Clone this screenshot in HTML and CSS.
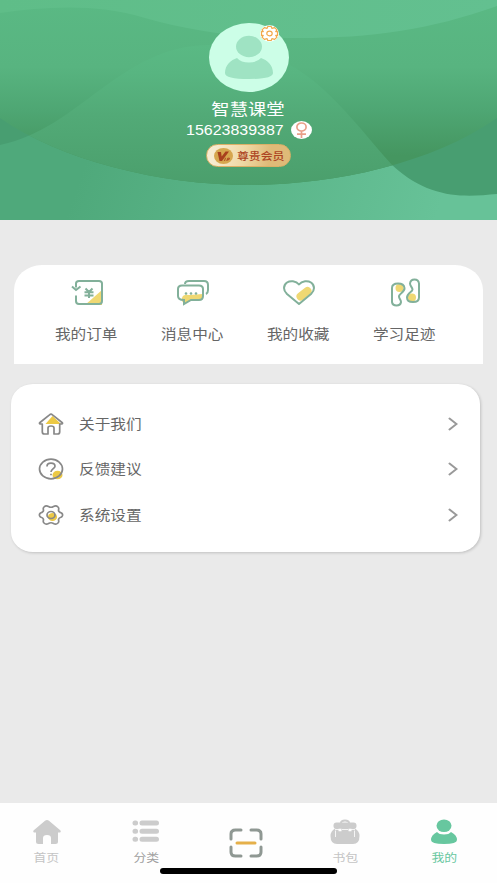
FILE: index.html
```html
<!DOCTYPE html>
<html lang="zh-CN">
<head>
<meta charset="utf-8">
<title>我的</title>
<link rel="stylesheet" href="styles.css">
</head>
<body>
<div class="app">
  <header class="hero">
    <svg class="hero-bg" viewBox="0 0 497 220" preserveAspectRatio="none">
      <defs>
        <linearGradient id="sky" x1="0" y1="0" x2="0" y2="185" gradientUnits="userSpaceOnUse"><stop offset="0" stop-color="#5ab984"/><stop offset=".36" stop-color="#58b480"/><stop offset=".6" stop-color="#4ea673"/><stop offset=".84" stop-color="#459660"/></linearGradient>
        <linearGradient id="hill" x1="0" y1="45" x2="0" y2="185" gradientUnits="userSpaceOnUse"><stop offset="0" stop-color="#5ab984"/><stop offset=".2" stop-color="#58b581"/><stop offset=".5" stop-color="#52aa77"/><stop offset="1" stop-color="#4b9f6c"/></linearGradient>
        <linearGradient id="ground" x1="100" y1="120" x2="430" y2="235" gradientUnits="userSpaceOnUse"><stop offset="0" stop-color="#4fa97b"/><stop offset="1" stop-color="#67c298"/></linearGradient>
        <linearGradient id="top" x1="0" y1="0" x2="497" y2="0" gradientUnits="userSpaceOnUse"><stop offset="0" stop-color="#5fbd88"/><stop offset="1" stop-color="#63c090"/></linearGradient>
        <clipPath id="bowl"><path d="M0 0H497V118C430 165 330 185 248 185C160 185 60 160 0 118Z"/></clipPath>
      </defs>
      <path fill="#489e71" d="M0 0H497V220H0Z"/>
      <path fill="url(#ground)" d="M0 145C80 129 120 45 210 45C303 45 340 107 392 165C430 200 465 197 497 194V220H0Z"/>
      <g clip-path="url(#bowl)">
        <path fill="url(#sky)" d="M0 0H497V220H0Z"/>
        <path fill="url(#hill)" d="M0 145C80 129 120 45 210 45C303 45 340 107 392 165C430 200 465 197 497 194V220H0Z"/>
      </g>
      <path fill="url(#top)" d="M0 0H497V6C430 30 370 38 300 38C240 38 195 32 145 18C95 3 45 7 0 13Z"/>
    </svg>
    <div class="avatar">
      <svg width="80" height="69" viewBox="0 0 80 69"><ellipse cx="40" cy="34.500" rx="40" ry="34.500" fill="#ccfee7"/><ellipse cx="40" cy="23.500" rx="13" ry="10.700" fill="#9fe3c3"/><path fill="#9fe3c3" d="M28 35Q32 39.500 40 39.500T52 35C58 37 64 42 64 50Q64 56 40 56T16 50C16 42 22 37 28 35Z"/></svg>
      <svg class="avatar-gear" width="19" height="17" viewBox="0 0 19 17"><ellipse cx="9.500" cy="8.500" rx="9.500" ry="8.300" fill="#fff"/><g fill="none" stroke="#f2a94c" stroke-width="1.200" stroke-linejoin="round"><path d="M7.800 1.500H11.200L11.900 3.400L14.600 2.600L17 4.900L15.700 6.600H17.500V10.400H15.700L17 12.100L14.600 14.400L11.900 13.600L11.200 15.500H7.800L7.100 13.600L4.400 14.400L2 12.100L3.300 10.400H1.500V6.600H3.300L2 4.900L4.400 2.600L7.100 3.400Z"/><ellipse cx="9.500" cy="8.500" rx="2.700" ry="2.300"/></g></svg>
    </div>
    <div class="name">智慧课堂</div>
    <div class="phone-row">
      <span class="phone">15623839387</span>
      <svg width="21" height="18" viewBox="0 0 21 18"><ellipse cx="10.500" cy="9" rx="10.500" ry="9" fill="#fff"/><g fill="none" stroke="#e9a08a" stroke-width="1.700"><ellipse cx="10.500" cy="6" rx="4.600" ry="4"/><path d="M10.500 10V17M6 13.200H15"/></g></svg>
    </div>
    <div class="vip">
      <svg width="19" height="16" viewBox="0 0 19 16"><ellipse cx="9.500" cy="8" rx="9.500" ry="8" fill="#d6a64e"/><path fill="#a8401d" d="M3.500 4H7L7.700 8.500L11.500 3.500H15L8 13H5.500Z"/><path d="M10.500 13L11.500 9.800M12.800 13L13.700 10.200H15.500L15 11.700H13.300" fill="none" stroke="#a8401d" stroke-width=".9"/></svg>
      <span class="vip-text">尊贵会员</span>
    </div>
  </header>

  <nav class="shortcuts">
    <a class="shortcut"><svg width="34" height="30" viewBox="0 0 34 30"><path fill="#efd873" d="M32 12V27H15Z"/><g fill="none" stroke="#82b09a" stroke-width="2"><path d="M6 9.500V5.500Q6 3 9 3H29Q32 3 32 5.500V23Q32 26 29 26H9Q6 26 6 23V17.500"/><path d="M2 8.500L6 12L10.500 8.500M15.500 10.500L19 14L22.500 10.500M14.500 14.300H23.500M14.500 17.500H23.500M19 14V20"/></g></svg><span class="label">我的订单</span></a>
    <a class="shortcut"><svg width="34" height="30" viewBox="0 0 34 30"><path fill="#efd873" d="M6 23V20Q7 16 13 17L27 16V19Q26 22 22 22H15L8 26Z"/><g fill="none" stroke="#82b09a" stroke-width="2"><path d="M9 6Q9 3 13 3H28Q32 3 32 7V12Q32 15 30 16"/><path d="M6 7.500H23Q27 7.500 27 11V18Q27 22 23 22H15L8 26V22Q2 22 2 18V11Q2 7.500 6 7.500Z"/></g><g fill="#82b09a"><circle cx="10" cy="15.500" r="1.300"/><circle cx="15" cy="15.500" r="1.300"/><circle cx="20" cy="15.500" r="1.300"/></g></svg><span class="label">消息中心</span></a>
    <a class="shortcut"><svg width="34" height="30" viewBox="0 0 34 30"><path d="M18.500 18.500L25.500 13" stroke="#efd873" stroke-width="8" stroke-linecap="round"/><path fill="none" stroke="#82b09a" stroke-width="2" stroke-linejoin="round" d="M17 6.500C14 2.500 8 2.500 5 4.500C1 7.500 1 12 5 16L17 26L29 16C33 12 33 7.500 29 4.500C26 2.500 20 2.500 17 6.500Z"/></svg><span class="label">我的收藏</span></a>
    <a class="shortcut"><svg width="34" height="30" viewBox="0 0 34 30"><circle cx="11.500" cy="10" r="4" fill="#efd873"/><circle cx="24" cy="19.500" r="4" fill="#efd873"/><g fill="none" stroke="#82b09a" stroke-width="2"><path d="M4 10Q4 5.500 10 5.500T16.500 10C17 14 11 15.500 11 18.500C11 20.500 13 22 13 24Q12.500 27.500 8.500 27.500T4 24Z"/><path d="M31 19.500Q31 24 25 24T19 19.500C19 15 24.500 14 24.500 11.500C24.500 9.500 22 8 22 5.500Q22.500 1.500 26.500 1.500T31 5.500Z"/></g></svg><span class="label">学习足迹</span></a>
  </nav>

  <section class="menu">
    <a class="item"><svg width="26" height="24" viewBox="0 0 26 24"><path fill="#ecc945" d="M14.500 4L23 12H7.500Z"/><path fill="none" stroke="#888" stroke-width="1.700" stroke-linejoin="round" d="M4.300 12H2.200Q.8 11.500 2 10.500L11.500 2.800Q13 1.500 14.500 2.800L24 10.500Q25.200 11.500 23.800 12H21.700V20Q21.700 22 19.500 22H16V16Q16 14 13 14T10 16V22H6.500Q4.300 22 4.300 20Z"/></svg><span class="label">关于我们</span><svg class="chevron" width="10" height="14" viewBox="0 0 10 14"><path d="M1.500 1.500L8.500 7L1.500 12.500"/></svg></a>
    <a class="item"><svg width="26" height="24" viewBox="0 0 26 24"><ellipse cx="19.500" cy="18" rx="5" ry="4.300" fill="#ecc945"/><ellipse cx="13" cy="12" rx="11.500" ry="9.800" fill="none" stroke="#888" stroke-width="1.700"/><path fill="none" stroke="#888" stroke-width="1.700" d="M9 9.500Q9 6.200 13 6.200T17 9.300C17 11.500 13 12 13 15M13 16.700V18.300"/></svg><span class="label">反馈建议</span><svg class="chevron" width="10" height="14" viewBox="0 0 10 14"><path d="M1.500 1.500L8.500 7L1.500 12.500"/></svg></a>
    <a class="item"><svg width="26" height="24" viewBox="0 0 26 24"><ellipse cx="14.500" cy="14" rx="4.600" ry="4" fill="#ecc945"/><g fill="none" stroke="#888" stroke-width="1.700" stroke-linejoin="round"><path d="M6 4Q8 2 10.500 3.500Q13 5 15.500 3.500Q18 2 20 4Q21.200 5.200 20.500 7Q20.300 9 23.500 10Q25.800 12 23.500 14Q20.300 15 20.500 17Q21.200 18.800 20 20Q18 22 15.500 20.500Q13 19 10.500 20.500Q8 22 6 20Q4.800 18.800 5.500 17Q5.700 15 2.500 14Q.2 12 2.500 10Q5.700 9 5.500 7Q4.800 5.200 6 4Z"/><ellipse cx="13" cy="12" rx="4" ry="3.500"/></g></svg><span class="label">系统设置</span><svg class="chevron" width="10" height="14" viewBox="0 0 10 14"><path d="M1.500 1.500L8.500 7L1.500 12.500"/></svg></a>
  </section>

  <footer class="tabbar">
    <a class="tab"><svg width="30" height="26" viewBox="0 0 30 26"><path fill="#ccc" d="M13 1.800Q15 .2 17 1.800L28.500 11.500Q29.500 13.500 27 13.500H26V22.500Q26 25 23.500 25H19V19Q19 16 15 16T11 19V25H6.500Q4 25 4 22.500V13.500H3Q.5 13.500 1.500 11.500Z"/></svg><span class="tab-text">首页</span></a>
    <a class="tab tab-dim"><svg width="28" height="26" viewBox="0 0 28 26"><g stroke="#ccc" stroke-width="5" stroke-linecap="round"><path d="M3 4H3.600M10 4H24.500M3 12.200H3.600M10 12.200H24.500M3 20.200H3.600M10 20.200H24.500"/></g></svg><span class="tab-text">分类</span></a>
    <a class="tab tab-scan"><svg width="34" height="30" viewBox="0 0 34 30"><path fill="none" stroke="#8f9893" stroke-width="3" stroke-linecap="round" d="M2 11V6Q2 2 6.500 2H12M22 2H27.500Q32 2 32 6V11M2 19V24Q2 28 6.500 28H12M22 28H27.500Q32 28 32 24V19"/><path stroke="#e5b04a" stroke-width="3" stroke-linecap="round" d="M8 15H26"/></svg></a>
    <a class="tab"><svg width="30" height="26" viewBox="0 0 30 26"><path fill="none" stroke="#ccc" stroke-width="2" d="M11 4Q11 1.500 15 1.500T19 4"/><rect x="3.500" y="3.500" width="23" height="6.500" rx="3" fill="#ccc"/><path fill="#ccc" d="M5 9.500H25Q29.500 12 29.500 17Q29.500 25 23 25H7Q.5 25 .5 17Q.5 12 5 9.500Z"/><path stroke="#fff" stroke-width=".8" fill="none" d="M5 10.500H9M12 10.500H18M21 10.500H25M5.500 11.500V18M24.500 11.500V18"/><path fill="#fff" d="M8.500 9.800H11.500V12.300H8.500ZM18.500 9.800H21.500V12.300H18.500Z"/></svg><span class="tab-text">书包</span></a>
    <a class="tab tab-active"><svg width="28" height="26" viewBox="0 0 28 26"><ellipse cx="14" cy="6.700" rx="7.500" ry="6.300" fill="#67c79f"/><path fill="#67c79f" d="M7 13Q9 15.500 14 15.500T21 13Q27 16 27 21Q27 25 14 25T1 21Q1 16 7 13Z"/></svg><span class="tab-text">我的</span></a>
    <div class="home-indicator"></div>
  </footer>
</div>
</body>
</html>
```
FILE: styles.css
```css
* { box-sizing: border-box; }
body {
  margin: 0;
  font-family: "Liberation Sans", "Noto Sans CJK SC", sans-serif;
  color: #666;
  background: #eaeaea;
}
svg { display: block; flex: none; }
.app { display: flex; flex-direction: column; height: 883px; overflow: hidden; }

.hero {
  position: relative;
  height: 220px;
  flex: none;
  padding-top: 23px;
  display: flex;
  flex-direction: column;
  align-items: center;
  color: #fff;
}
.hero-bg { position: absolute; inset: 0; width: 100%; height: 100%; }
.avatar { position: relative; height: 69px; }
.avatar-gear { position: absolute; right: 10px; top: 2px; }
.name {
  position: relative;
  margin-top: 8px;
  font-size: 16px;
  line-height: 20px;
  transform: scaleX(1.145);
}
.phone-row {
  position: relative;
  display: flex;
  align-items: center;
  gap: 14px;
  height: 19px;
  margin-left: 7px;
}
.phone { font-size: 14px; transform: scaleX(1.14); }
.vip {
  position: relative;
  display: flex;
  align-items: center;
  width: 85px;
  height: 23px;
  margin-top: 5px;
  padding-left: 7px;
  gap: 4px;
  border: 1px solid #dcb066;
  border-radius: 12px;
  background: linear-gradient(100deg, #f7ebd0 10%, #efd8a4 45%, #dfba78 75%);
}
.vip-text {
  font-size: 10.5px;
  font-weight: 500;
  color: #ad4423;
  transform: scaleX(1.13);
  transform-origin: left;
  white-space: nowrap;
}

.shortcuts {
  display: grid;
  grid-template-columns: repeat(4, 106px);
  justify-content: center;
  height: 99px;
  flex: none;
  margin: 45px 14px 0;
  padding: 13px 5px 0 0;
  background: #fff;
  border-radius: 28px 28px 0 0 / 25px 25px 0 0;
}
.shortcut { display: flex; flex-direction: column; align-items: center; }
.label {
  font-size: 13.600px;
  line-height: 20px;
  transform: scaleX(1.15);
}
.shortcut .label { margin: 17px 1px 0 0; }

.menu {
  display: flex;
  flex-direction: column;
  height: 168px;
  flex: none;
  margin: 20px 17px 0 11px;
  padding: 17px 22px 0 27px;
  background: #fff;
  border-radius: 22px / 20px;
  box-shadow: 1px 1px 3px rgba(0, 0, 0, .18);
}
.item { display: flex; align-items: center; height: 45.500px; }
.item .label { margin: 1.500px 0 0 15px; transform-origin: left; }
.chevron { margin-left: auto; fill: none; stroke: #999; stroke-width: 2; stroke-linecap: round; }

.tabbar {
  position: relative;
  display: grid;
  grid-template-columns: repeat(5, 99.400px);
  height: 80px;
  flex: none;
  margin-top: auto;
  background: #fefefe;
}
.tab {
  display: flex;
  flex-direction: column;
  align-items: center;
  padding: 16px 6px 0 0;
  color: #c4c4c4;
}
.tab-dim { color: #a0a0a0; }
.tab-active { color: #67c79f; }
.tab-scan { padding: 25px 5px 0 0; }
.tab-text { margin-top: 4px; font-size: 11.300px; line-height: 18px; transform: scaleX(1.14); }
.home-indicator {
  position: absolute;
  left: 160px;
  bottom: 9px;
  width: 177px;
  height: 6px;
  border-radius: 3px;
  background: #000;
}
```
